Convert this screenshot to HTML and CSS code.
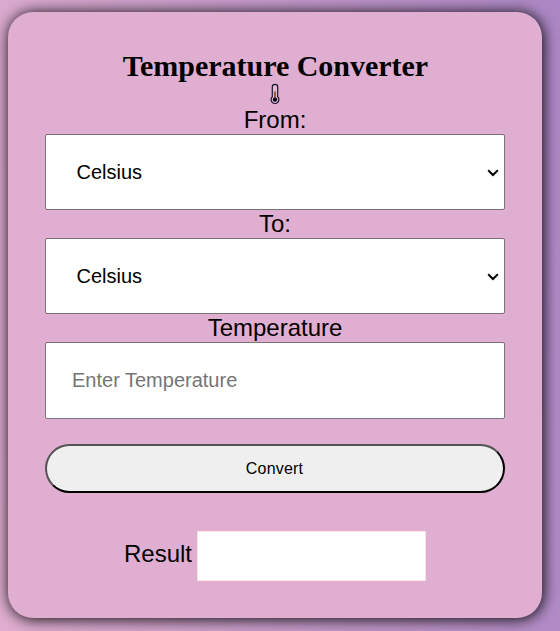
FILE: index.html
```html
<!DOCTYPE html>
<html lang="en">
<head>
<meta charset="utf-8">
<title>Temperature Converter</title>
<link rel="stylesheet" href="styles.css">
</head>
<body>
<main class="card">
  <h1 class="title">Temperature Converter</h1>
  <svg class="thermo" viewBox="0 0 14 22" width="14" height="22" fill="none" stroke="#171330">
    <path d="M4.3 4a2.7 2.7 0 0 1 5.4 0v9.8a3.9 3.9 0 1 1-5.4 0z" fill="#e5b9d2" stroke-width="1.2"/>
    <path d="M7 8.5v7" stroke="#8b4a20" stroke-width="1.7"/>
    <circle cx="7" cy="16.6" r="2.2" fill="#080818" stroke="none"/>
  </svg>
  <label class="label" for="from">From:</label>
  <div class="picker">
    <select class="field select" id="from"><option>Celsius</option><option>Fahrenheit</option></select>
    <svg class="chevron" viewBox="0 0 12 8" width="12" height="8"><path d="M1.2 1.2 6 6l4.8-4.8"/></svg>
  </div>
  <label class="label" for="to">To:</label>
  <div class="picker">
    <select class="field select" id="to"><option>Celsius</option><option>Fahrenheit</option></select>
    <svg class="chevron" viewBox="0 0 12 8" width="12" height="8"><path d="M1.2 1.2 6 6l4.8-4.8"/></svg>
  </div>
  <label class="label" for="temp">Temperature</label>
  <input class="field input" id="temp" type="text" placeholder="Enter Temperature">
  <button class="convert">Convert</button>
  <div class="result"><span>Result</span><output class="output"></output></div>
</main>
</body>
</html>
```
FILE: styles.css
```css
* { box-sizing: border-box; }
html { height: 100%; }
body {
  margin: 0;
  height: 631px;
  padding: 12px 18px 13px 8px;
  overflow: hidden;
  background: linear-gradient(84deg, #e0aed0, #ac87c5);
  font-family: "Liberation Sans", Arial, sans-serif;
}
.card {
  display: flex;
  flex-direction: column;
  align-items: center;
  height: 606px;
  padding: 37px 37px 0;
  border-radius: 25px;
  background: #e0aed0;
  box-shadow: 1px 1px 15px #000;
}
.card > * { flex-shrink: 0; }
.title { margin: 0; padding-left: 1px; font: bold 30px/34px "Liberation Serif", serif; letter-spacing: -0.02px; white-space: nowrap; }
.thermo { display: block; margin-bottom: 1px; }
.label { height: 28px; font-size: 24px; line-height: 28px; }
.field { display: block; width: 460px; height: 76px; margin: 0; background: #fff; border: 1px solid #767676; border-radius: 2px; font: 20px "Liberation Sans", Arial, sans-serif; color: #000; }
.picker { position: relative; }
.select { padding: 0 0 0 30.5px; appearance: none; }
.chevron { position: absolute; right: 6px; top: 35px; fill: none; stroke: #000; stroke-width: 2; pointer-events: none; }
.input { padding: 0 26px; height: 77px; }
.input::placeholder { color: #757575; }
.convert { width: 460px; height: 49px; margin-top: 25px; padding: 0 1px 0 0; border: 2px outset #000; border-radius: 25px; background: #efefef; font: 16px "Liberation Sans", Arial, sans-serif; letter-spacing: 0.2px; color: #000; }
.result { display: flex; align-items: center; gap: 5px; margin-top: 38px; font-size: 24px; line-height: 28px; }
.result span { position: relative; top: -2px; }
.output { width: 229px; height: 50px; background: #fff; border: 1px solid #ffe6e6; }
```
